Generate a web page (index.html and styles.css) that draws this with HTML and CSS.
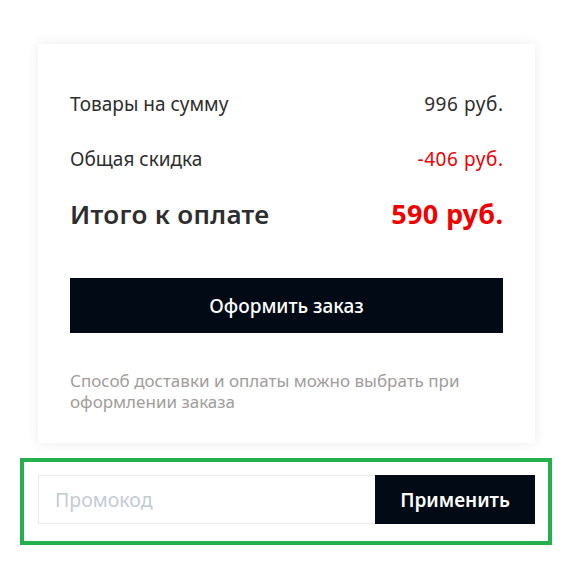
FILE: index.html
```html
<!DOCTYPE html>
<html lang="ru">
<head>
<meta charset="utf-8">
<title>Корзина — итог</title>
<link rel="stylesheet" href="styles.css">
</head>
<body>
<div class="page">
  <section class="summary">
    <div class="summary__row">
      <span class="summary__label">Товары на сумму</span>
      <span class="summary__value">996 руб.</span>
    </div>
    <div class="summary__row">
      <span class="summary__label">Общая скидка</span>
      <span class="summary__value summary__value--red">-406 руб.</span>
    </div>
    <div class="summary__row summary__row--total">
      <span class="summary__label">Итого к оплате</span>
      <span class="summary__value summary__value--red">590 руб.</span>
    </div>
    <button class="btn btn--order" type="button">Оформить заказ</button>
    <p class="summary__note">Способ доставки и оплаты можно выбрать при оформлении заказа</p>
  </section>

  <div class="promo-frame">
    <form class="promo">
      <input class="promo__input" type="text" placeholder="Промокод">
      <button class="btn btn--apply" type="button">Применить</button>
    </form>
  </div>
</div>
</body>
</html>
```

FILE: styles.css
```css
* {
  box-sizing: border-box;
}

html, body {
  margin: 0;
  background: #fff;
}

body {
  font-family: "Noto Sans", "Open Sans", sans-serif;
  color: #2e2e2e;
}

.page {
  width: 578px;
  padding: 44px 43px 0 38px;
  display: flex;
  flex-direction: column;
}

/* order summary card */
.summary {
  background: #fff;
  box-shadow: 0 0 12px rgba(0, 0, 0, 0.08);
  padding: 32px 32px 31px;
  display: flex;
  flex-direction: column;
}

.summary__row {
  display: flex;
  justify-content: space-between;
  align-items: center;
  height: 55px;
  font-size: 19px;
}

.summary__value {
  letter-spacing: 0.6px;
  margin-right: -0.6px;
}

.summary__row--total {
  font-size: 26px;
  font-weight: 600;
}

.summary__row--total .summary__label {
  letter-spacing: 0.3px;
}

.summary__row--total .summary__value {
  font-size: 27px;
  font-weight: 700;
  letter-spacing: 0.3px;
  margin-right: -0.3px;
}

.summary__value--red {
  color: #f00000;
}

.btn {
  border: 0;
  background: #020a15;
  color: #fff;
  font-family: inherit;
  cursor: pointer;
}

.btn--order {
  height: 55px;
  margin-top: 37px;
  font-size: 19px;
  font-weight: 500;
}

.summary__note {
  margin: 37px 0 0;
  font-size: 17px;
  line-height: 21px;
  color: #a19d9b;
}

/* promo code block */
.promo-frame {
  margin: 15px -17px 0 -18px;
  border: 4px solid #22b14c;
  padding: 13px 13px 17px 14px;
}

.promo {
  display: flex;
  height: 49px;
  margin: 0;
}

.promo__input {
  flex: 1;
  min-width: 0;
  border: 1px solid #ececec;
  border-right: 0;
  padding: 0 16px;
  font-family: inherit;
  font-size: 19.5px;
  color: #2e2e2e;
  outline: none;
}

.promo__input::placeholder {
  color: #c5cbd4;
}

.btn--apply {
  width: 160px;
  font-size: 19px;
  font-weight: 600;
}
```
